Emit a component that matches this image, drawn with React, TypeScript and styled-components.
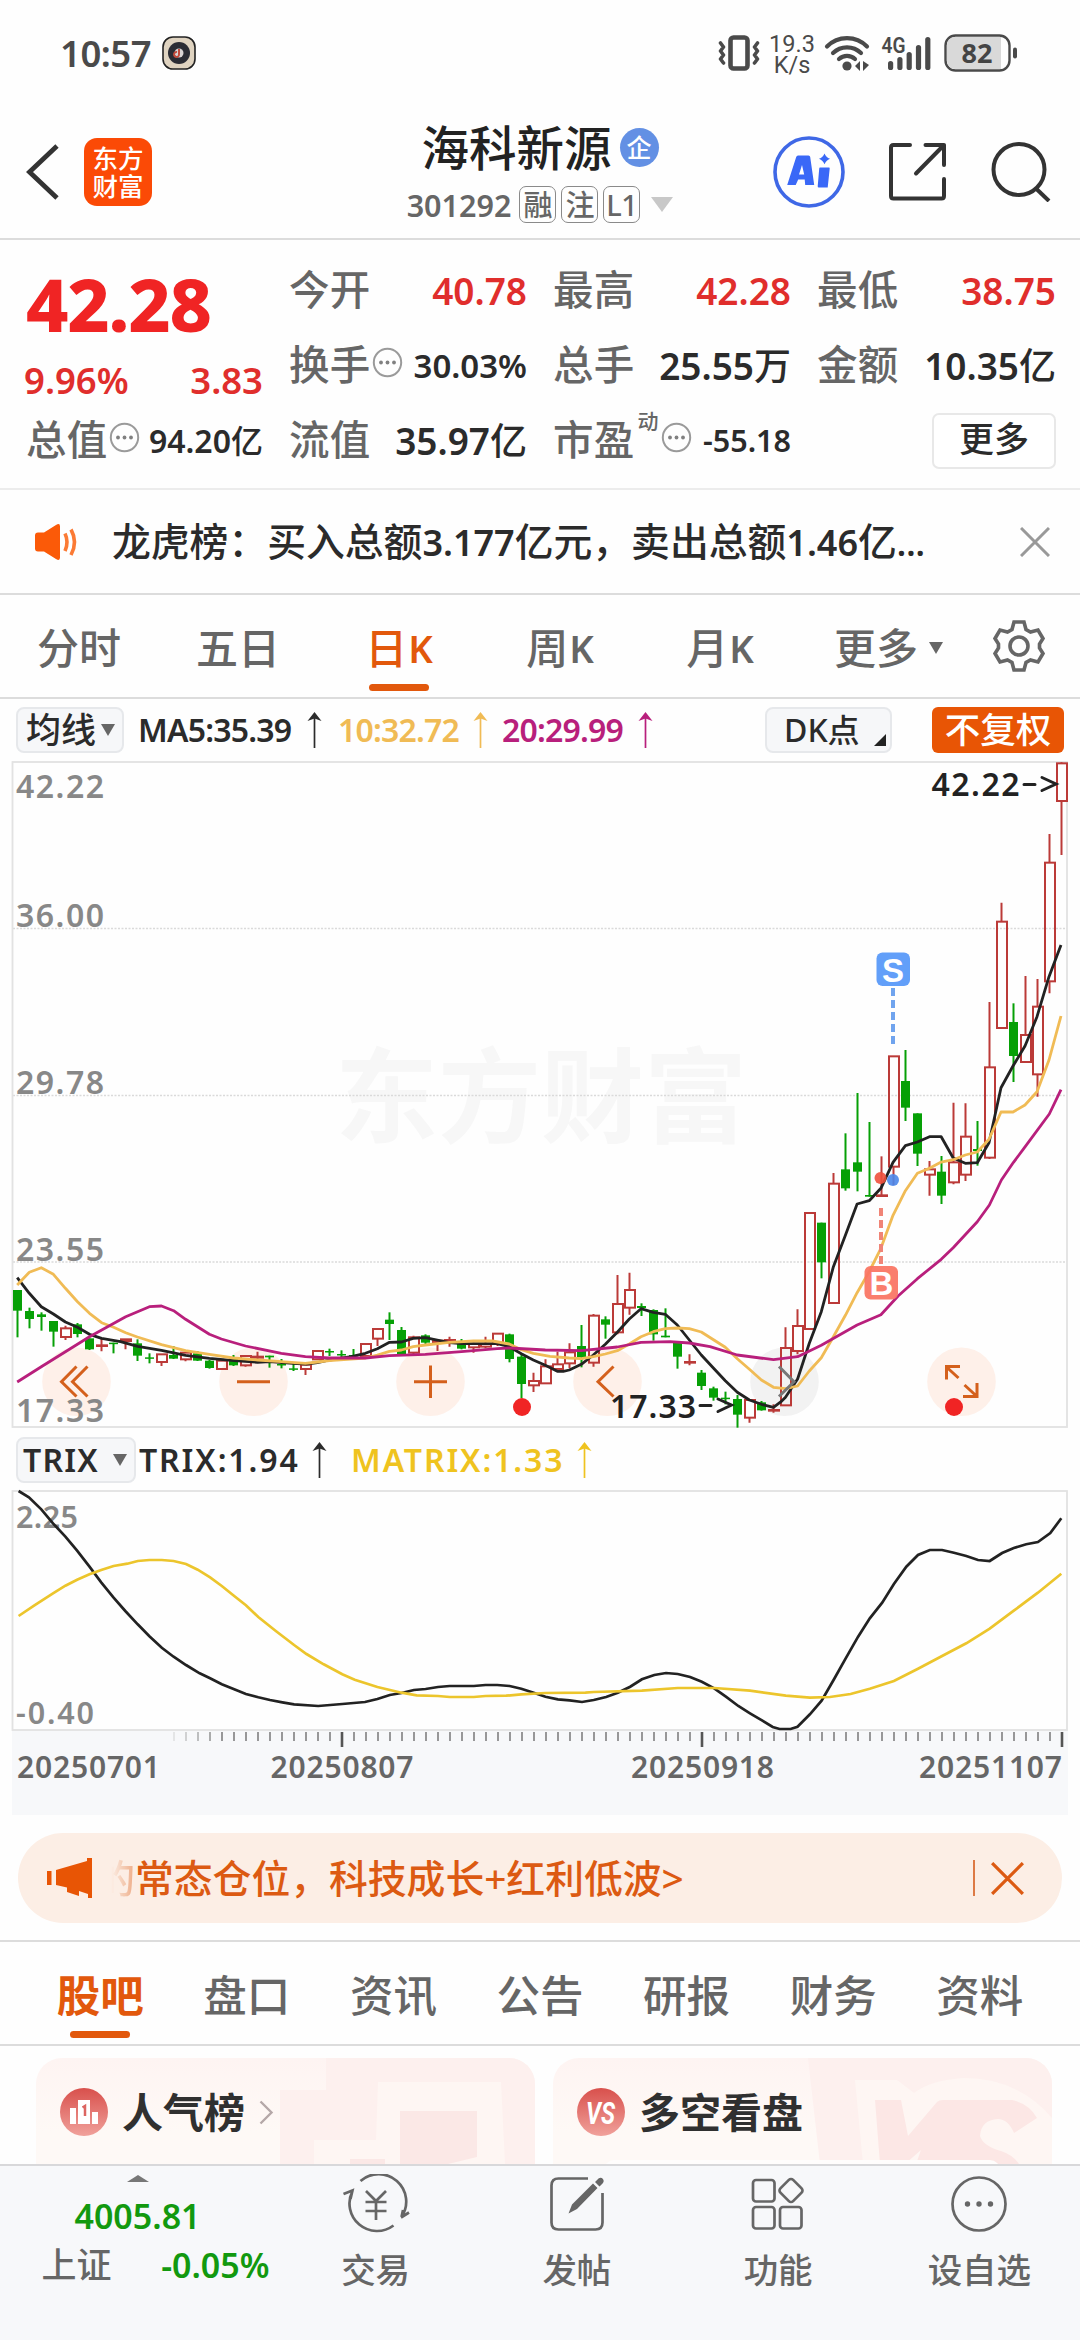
import React from "react";
import styled, { createGlobalStyle, css } from "styled-components";

const ORANGE = "#e2580c";
const RED = "#e02e2c";
const GREEN = "#12990f";
const INK = "#2b2b2b";
const GREY = "#666666";
const AMBER = "#f0bb55";
const GOLD = "#efc31f";
const MAGENTA = "#b81f7c";
const SANS = '"Noto Sans", "Noto Sans CJK SC", sans-serif';

const GlobalStyle = createGlobalStyle`
  * { box-sizing: border-box; }
  body { margin: 0; background: #fefefe; }
`;

const Screen = styled.div`
  width: 1080px;
  height: 2340px;
  overflow: hidden;
  display: flex;
  flex-direction: column;
  background: #fefefe;
  color: ${INK};
  font-family: ${SANS};
  font-weight: 500;
  white-space: nowrap;
  line-height: 1;
  > * { flex: none; }
`;

const Num = styled.span<{ $size?: number; $spacing?: number }>`
  font-weight: 600;
  ${(p) => p.$size && css`font-size: ${p.$size}px;`}
  ${(p) => p.$spacing && css`letter-spacing: ${p.$spacing}px;`}
`;

/* ---------- status bar ---------- */

const StatusBar = styled.div`
  height: 106px;
  padding: 0 62px 0 60px;
  display: flex;
  align-items: center;
  justify-content: space-between;
  color: #4a4a4a;
`;

const StatusGroup = styled.div<{ $gap: number }>`
  display: flex;
  align-items: center;
  gap: ${(p) => p.$gap}px;
`;

const Clock = styled.span`
  font-size: 36.5px;
  font-weight: 600;
  letter-spacing: -0.5px;
`;

const NetSpeed = styled.span`
  width: 42px;
  display: flex;
  flex-direction: column;
  align-items: center;
  font: 400 23.5px/21px Roboto, sans-serif;
  margin-top: 3px;
`;

/* ---------- header ---------- */

const Header = styled.header`
  height: 134px;
  display: flex;
  align-items: center;
  justify-content: space-between;
  border-bottom: 2px solid #dcdcdc;
`;

const HeaderSide = styled.div<{ $end?: boolean }>`
  width: 310px;
  display: flex;
  align-items: center;
  padding: ${(p) => (p.$end ? "0 29px 0 0" : "0 0 0 26px")};
  gap: ${(p) => (p.$end ? 43 : 25)}px;
  justify-content: ${(p) => (p.$end ? "flex-end" : "flex-start")};
`;

const Logo = styled.div`
  width: 68px;
  height: 68px;
  border-radius: 13px;
  background: #fb4a06;
  color: #fff;
  font: 500 25.5px/28px "Noto Sans CJK SC", sans-serif;
  text-align: center;
  white-space: pre-line;
  padding-top: 5px;
`;

const TitleBlock = styled.div`
  display: flex;
  flex-direction: column;
  align-items: center;
  gap: 15px;
  padding-top: 3px;
`;

const TitleRow = styled.div<{ $gap: number }>`
  display: flex;
  align-items: center;
  gap: ${(p) => p.$gap}px;
`;

const StockName = styled.h1`
  margin: 0;
  font-size: 47.5px;
  font-weight: 500;
  color: #222;
`;

const CompanyBadge = styled.span`
  width: 39px;
  height: 39px;
  border-radius: 50%;
  background: #6390e4;
  color: #fff;
  font-size: 25px;
  display: grid;
  place-items: center;
`;

const StockCode = styled.span`
  font-size: 30.5px;
  font-weight: 600;
  color: ${GREY};
  margin-right: 3px;
`;

const Tag = styled.span`
  width: 37px;
  height: 37px;
  border: 1.5px solid #8a8a8a;
  border-radius: 7px;
  color: ${GREY};
  font-size: 29px;
  letter-spacing: -0.5px;
  display: grid;
  place-items: center;
`;

const Triangle = styled.i<{ $w: number; $h: number; $color: string; $up?: boolean; $ml?: number }>`
  width: 0;
  height: 0;
  margin-left: ${(p) => p.$ml ?? 0}px;
  border-left: ${(p) => p.$w / 2}px solid transparent;
  border-right: ${(p) => p.$w / 2}px solid transparent;
  ${(p) =>
    p.$up
      ? css`border-bottom: ${p.$h}px solid ${p.$color};`
      : css`border-top: ${p.$h}px solid ${p.$color};`}
`;

/* ---------- quote ---------- */

const QuoteGrid = styled.section`
  height: 250px;
  padding: 13px 23px 0 26px;
  display: grid;
  grid-template-columns: 237px 238px 238px 239px;
  grid-template-rows: 75px 75px 75px;
  column-gap: 26px;
  border-bottom: 2px solid #ececec;
`;

const PriceCell = styled.div`
  grid-row: span 2;
  display: flex;
  flex-direction: column;
  color: ${RED};
`;

const Price = styled.strong`
  font-size: 73.5px;
  line-height: 102px;
  font-weight: 800;
  letter-spacing: -1.2px;
  color: #f02424;
`;

const PriceChange = styled.div`
  display: flex;
  justify-content: space-between;
  font-size: 36.5px;
  font-weight: 600;
  line-height: 50px;
  margin-left: -2px;
`;

const Cell = styled.div`
  display: flex;
  align-items: center;
`;

const CellLabel = styled.span`
  font-size: 40.5px;
  color: ${GREY};
  letter-spacing: 0.3px;
`;

const CellValue = styled.span<{ $size: number; $color?: string }>`
  margin-left: auto;
  font-size: ${(p) => p.$size}px;
  color: ${(p) => p.$color ?? INK};
`;

const Superscript = styled.sup`
  font-size: 21px;
  line-height: 1;
  color: ${GREY};
  align-self: flex-start;
  margin: 8px 1px 0 3px;
`;

const MoreButton = styled.button`
  margin-left: auto;
  width: 124px;
  height: 56px;
  border: 2px solid #e8e8e8;
  border-radius: 7px;
  background: #fff;
  font: 500 35px/1 ${SANS};
  color: ${INK};
  padding: 0 0 5px;
`;

/* ---------- news ---------- */

const NewsBar = styled.section`
  height: 105px;
  padding: 0 30px 0 33px;
  display: flex;
  align-items: center;
  border-bottom: 2px solid #dcdcdc;
`;

const NewsText = styled.span`
  flex: 1;
  margin-left: 31px;
  font-size: 38.8px;
`;

/* ---------- period tabs ---------- */

const PeriodTabs = styled.nav`
  height: 104px;
  display: flex;
  align-items: stretch;
  border-bottom: 2px solid #dcdcdc;
  padding-right: 34px;
`;

const tabUnderline = css<{ $active?: boolean }>`
  &::after {
    content: "";
    width: 60px;
    height: 7px;
    border-radius: 4px;
    margin-bottom: 6px;
    background: ${(p) => (p.$active ? ORANGE : "transparent")};
  }
`;

const PeriodTab = styled.span<{ $active?: boolean; $w: number }>`
  width: ${(p) => p.$w}px;
  font-size: 42px;
  color: ${(p) => (p.$active ? ORANGE : GREY)};
  display: flex;
  flex-direction: column;
  align-items: center;
  justify-content: flex-end;
  gap: 14px;
  ${tabUnderline}
`;

const TabLabel = styled.span`
  display: flex;
  align-items: center;
  height: 44px;
`;

const KLetter = styled.span`
  font-size: 38px;
  font-weight: 600;
  margin-left: 1px;
`;

const SettingsSlot = styled.span`
  margin-left: auto;
  display: flex;
  align-items: center;
`;

/* ---------- indicator rows ---------- */

const IndicatorRow = styled.div<{ $h: number }>`
  height: ${(p) => p.$h}px;
  display: flex;
  align-items: center;
  padding: 0 16px;
`;

const Chip = styled.span<{ $w: number; $size: number; $corner?: boolean; $pad?: number }>`
  width: ${(p) => p.$w}px;
  height: 46px;
  border: 2px solid #e6e8eb;
  border-radius: 8px;
  background: #f6f7f9;
  display: flex;
  align-items: center;
  justify-content: ${(p) => (p.$corner ? "flex-start" : "space-between")};
  padding: 0 ${(p) => (p.$corner ? 4 : 7)}px 0 ${(p) => p.$pad ?? 8}px;
  font-size: ${(p) => p.$size}px;
`;

const CornerMark = styled.i`
  margin-left: auto;
  align-self: flex-end;
  margin-bottom: 5px;
  border-left: 12px solid transparent;
  border-bottom: 12px solid #222;
`;

const Reading = styled.span<{ $color: string; $ml: number; $w: number; $spacing: number }>`
  margin-left: ${(p) => p.$ml}px;
  width: ${(p) => p.$w}px;
  display: flex;
  align-items: center;
  justify-content: space-between;
  font-size: 32px;
  font-weight: 600;
  letter-spacing: ${(p) => p.$spacing}px;
  color: ${(p) => p.$color};
`;

const SolidChip = styled.span`
  width: 132px;
  height: 46px;
  margin-left: 40px;
  border-radius: 6px;
  background: #e85505;
  color: #fff;
  font-size: 35.5px;
  display: grid;
  place-items: center;
`;

const Grow = styled.span`
  flex: 1;
`;

const ChartSvg = styled.svg`
  display: block;
  flex: none;
  font-family: ${SANS};
  font-weight: 600;
`;

/* ---------- banner ---------- */

const BannerWrap = styled.div`
  padding: 18px 18px 17px;
  border-bottom: 2px solid #dcdcdc;
`;

const Banner = styled.div`
  height: 90px;
  border-radius: 45px;
  background: #fceee5;
  color: #dc5a12;
  display: flex;
  align-items: center;
  padding: 0 38px 0 29px;
`;

const BannerText = styled.span`
  flex: 1;
  margin-left: 17px;
  font-size: 38.8px;
  display: flex;
`;

const FadedGlyph = styled.span`
  width: 25px;
  overflow: hidden;
  direction: rtl;
  opacity: 0.45;
  mask-image: linear-gradient(90deg, transparent 5%, #000);
`;

const BannerDivider = styled.i`
  width: 2px;
  height: 36px;
  background: #dd7a45;
  margin-right: 16px;
`;

/* ---------- section tabs ---------- */

const SectionTabs = styled.nav`
  height: 104px;
  padding: 0 27px;
  display: flex;
  border-bottom: 2px solid #dcdcdc;
`;

const SectionTab = styled.span<{ $active?: boolean }>`
  flex: 1;
  font-size: 43.5px;
  font-weight: ${(p) => (p.$active ? 700 : 500)};
  color: ${(p) => (p.$active ? ORANGE : GREY)};
  display: flex;
  flex-direction: column;
  align-items: center;
  justify-content: flex-end;
  gap: 14px;
  ${tabUnderline}
`;

/* ---------- cards ---------- */

const CardRow = styled.div`
  height: 118px;
  padding: 12px 28px 0 36px;
  display: flex;
  gap: 18px;
  overflow: hidden;
`;

const Card = styled.article`
  position: relative;
  width: 499px;
  height: 106px;
  border-radius: 26px 26px 0 0;
  overflow: hidden;
  background: linear-gradient(180deg, #fef4f2, #fef9f6 70%);
`;

const CardArt = styled.svg`
  position: absolute;
  inset: 0;
`;

const CardHead = styled.div`
  position: relative;
  height: 108px;
  padding-left: 24px;
  display: flex;
  align-items: center;
  font-size: 41px;
  font-weight: 700;
  color: #303030;
`;

const CardTitle = styled.span`
  margin: 0 14px;
`;

/* ---------- bottom bar ---------- */

const BottomBar = styled.footer`
  height: 176px;
  border-top: 2px solid #d8d8da;
  background: #f7f8fa;
  display: flex;
`;

const IndexBlock = styled.div`
  width: 275px;
  display: flex;
  flex-direction: column;
  align-items: center;
  padding: 9px 0 0;
  color: ${GREEN};
  font-weight: 600;
`;

const IndexValue = styled.span`
  font-size: 34px;
  line-height: 40px;
  margin-top: 14px;
`;

const IndexRow = styled.div`
  display: flex;
  align-items: center;
  justify-content: space-between;
  width: 228px;
  margin: 9px 0 0 36px;
  font-size: 34px;
  line-height: 40px;
`;

const IndexName = styled.span`
  font-size: 35px;
  font-weight: 500;
  color: ${GREY};
`;

const NavItem = styled.div`
  flex: 1;
  display: flex;
  flex-direction: column;
  align-items: center;
  padding-top: 8px;
  gap: 19px;
  font-size: 34.5px;
  color: ${GREY};
`;

/* ---------- icons ---------- */

const InfoIcon = styled.svg`
  margin-top: -7px;
  margin-left: 1px;
`;

const InfoDots = () => (
  <InfoIcon width="31" height="31" viewBox="0 0 31 31">
    <circle cx="15.5" cy="15.5" r="13.7" fill="none" stroke="#9a9a9a" strokeWidth="2" />
    {[9, 15.5, 22].map((x) => (
      <circle key={x} cx={x} cy="15.5" r="1.9" fill="#808080" />
    ))}
  </InfoIcon>
);

const AppBadge = () => (
  <svg width="34" height="34" viewBox="0 0 34 34">
    <rect x="1" y="1" width="32" height="32" rx="10" fill="#dfd3c0" stroke="#222" strokeWidth="1.6" />
    <circle cx="17" cy="17" r="11" fill="#2b2c34" />
    <circle cx="17" cy="17" r="4.5" fill="#d9d4d4" />
    <path d="M17 13v5a2.5 2.5 0 1 1-2-2" fill="none" stroke="#c24a3c" strokeWidth="2" />
  </svg>
);

const Vibrate = () => (
  <svg width="42" height="36" viewBox="0 0 42 36" fill="none" stroke="#4a4a4a" strokeLinecap="round" strokeLinejoin="round">
    <rect x="12.5" y="2.5" width="17" height="31" rx="3" strokeWidth="4.6" />
    <path d="M2.500 8l3 4-3 4 3 4-3 4 3 4M39.500 8l-3 4 3 4-3 4 3 4-3 4" strokeWidth="3.600" />
  </svg>
);

const Wifi = () => (
  <svg width="46" height="36" viewBox="0 0 46 36" fill="none" stroke="#4a4a4a" strokeLinecap="round">
    <path d="M3 11.500A28 28 0 0 1 43 11.500" strokeWidth="4.200" />
    <path d="M9 18A20 20 0 0 1 37 18" strokeWidth="4.200" />
    <path d="M15 24A12 12 0 0 1 31 24" strokeWidth="4.200" />
    <circle cx="23" cy="31" r="4.600" fill="#4a4a4a" stroke="none" />
    <path d="M36 26v10l-5-5zM39 26v10l6-6z" fill="#4a4a4a" stroke="none" />
  </svg>
);

const Signal = () => (
  <svg width="52" height="36" viewBox="0 0 52 36" overflow="visible">
    <text x="0.500" y="17.500" fontSize="22" fontWeight="600" fill="#4a4a4a" textLength="24" lengthAdjust="spacingAndGlyphs" fontFamily="Roboto, sans-serif">4G</text>
    {[26, 22, 17, 10, 2].map((y, i) => (
      <rect key={y} x={7 + i * 9.3} y={y} width="5.2" height={35 - y} rx="2.6" fill="#4a4a4a" />
    ))}
  </svg>
);

const Battery = () => (
  <svg width="74" height="38" viewBox="0 0 74 38">
    <rect x="1.500" y="1.500" width="64" height="35" rx="10" fill="#fefefe" stroke="#4a4a4a" strokeWidth="2.400" />
    <path d="M11 3H57V35H11A8 8 0 0 1 3 27V11A8 8 0 0 1 11 3Z" fill="#d9d9d9" />
    <rect x="69" y="13.500" width="4" height="11" rx="2" fill="#4a4a4a" />
    <text x="33" y="28.500" fontSize="27" fontWeight="700" fill="#444" textAnchor="middle">82</text>
  </svg>
);

const Back = () => (
  <svg width="33" height="56" viewBox="0 0 33 56" fill="none" stroke="#333" strokeWidth="4.800">
    <path d="M31 2L3.500 28L31 54" />
  </svg>
);

const AiIcon = () => (
  <svg width="72" height="72" viewBox="0 0 72 72">
    <circle cx="36" cy="36" r="34" fill="none" stroke="#3f68e6" strokeWidth="3.600" />
    <path d="M25 19.500h10.500q1.500 0 1.700 1.500l4 28h-9l-.5-5.500h-6.500l-2.500 5.500h-8.500l9-28q.5-1.500 1.800-1.500zM29 29l-3 9.500h5.200z" fill="#3a68f7" fillRule="evenodd" />
    <path d="M47 31.500h9q.8 0 .7 1l-2 19h-8.800q-1.300 0-1.200-1.200l1.500-17.500q.1-1.300.8-1.300zM51.500 17.500q1.500 4 5.500 5.200q-4 1.500-5.500 5.500q-1.500-4-5.500-5.500q4-1.200 5.500-5.200z" fill="#3a68f7" />
  </svg>
);

const Share = () => (
  <svg width="60" height="60" viewBox="0 0 60 60" fill="none" stroke="#333" strokeWidth="4" strokeLinecap="round" strokeLinejoin="round">
    <path d="M22 3H5.500Q3 3 3 5.500V54Q3 56.500 5.500 56.500H53.500Q56 56.500 56 54V37M37.500 3H56V23M56 3L28 31.500" />
  </svg>
);

const Search = () => (
  <svg width="60" height="60" viewBox="0 0 60 60" fill="none" stroke="#333" strokeWidth="4">
    <circle cx="28" cy="27.500" r="25.500" />
    <path d="M45 46.500L58 59" />
  </svg>
);

const Speaker = () => (
  <svg width="48" height="40" viewBox="0 0 48 40">
    <path d="M2 13.500Q2 10.500 5 10.500H11L23 3Q27 0.500 27 4.500V35.500Q27 39.500 23 37L11 29.500H5Q2 29.500 2 26.500Z" fill="#fb5a08" />
    <path d="M32 11.500Q36 20 32 29M38 7.500Q45 20 38 33" fill="none" stroke="#fb7a34" strokeWidth="3.600" />
  </svg>
);

const Cross = ({ size, color }: { size: number; color: string }) => (
  <svg width={size} height={size} viewBox="0 0 30 30" stroke={color} strokeWidth="3">
    <path d="M1 1L29 29M29 1L1 29" />
  </svg>
);

const Gear = () => (
  <svg width="54" height="54" viewBox="0 0 54 54" fill="none" stroke={GREY} strokeWidth="3.600" strokeLinejoin="miter">
    <path d="M22 3H32L34 10.500L38.500 13L46 11L51 19.500L47.500 25V29L51 34.500L46 43L38.500 41L34 43.500L32 51H22L20 43.500L15.500 41L8 43L3 34.500L6.500 29V25L3 19.500L8 11L15.500 13L20 10.500Z" />
    <circle cx="27" cy="27" r="9" />
  </svg>
);

const UpArrow = ({ color }: { color: string }) => (
  <svg width="15" height="36" viewBox="0 0 15 36">
    <path d="M7.500 4V36" stroke={color} strokeWidth="1.700" />
    <path d="M7.500 0L14.500 9L7.500 6.500L.5 9Z" fill={color} />
  </svg>
);

const Megaphone = () => (
  <svg width="46" height="40" viewBox="0 0 46 40" fill="#e85505">
    <path d="M0 13H4.500V27H0ZM9 12L40 3V0H45V40H41V36L32 33V38L20 34V29.500L9 27Z" />
  </svg>
);

const PodiumIcon = () => (
  <svg width="48" height="48" viewBox="0 0 48 48">
    <defs>
      <linearGradient id="coral" x1="0" y1="0" x2="0" y2="1">
        <stop offset="0" stopColor="#d8504c" />
        <stop offset="1" stopColor="#f0a19b" />
      </linearGradient>
    </defs>
    <circle cx="24" cy="24" r="24" fill="url(#coral)" />
    <path d="M10 20H16V36H10ZM18 12H30V36H18ZM32 24H38V36H32Z" fill="#fff" />
    <path d="M22.500 19.500L25 18V28" fill="none" stroke="#dc6561" strokeWidth="2.500" />
  </svg>
);

const VsIcon = () => (
  <svg width="48" height="48" viewBox="0 0 48 48">
    <circle cx="24" cy="24" r="24" fill="url(#coral)" />
    <text x="9" y="35.500" fontSize="32" fontWeight="700" fontStyle="italic" fill="#fff" textLength="29" lengthAdjust="spacingAndGlyphs" fontFamily="Roboto, sans-serif">VS</text>
  </svg>
);

const Chevron = () => (
  <svg width="15" height="25" viewBox="0 0 15 25" fill="none" stroke="#b5a8a8" strokeWidth="2.400">
    <path d="M1.500 1.500L12.500 12.500L1.500 23.500" />
  </svg>
);

const navStroke = { fill: "none", stroke: GREY, strokeWidth: 2.7 } as const;

const TradeIcon = () => (
  <svg width="68" height="60" viewBox="0 0 68 60" {...navStroke}>
    <path d="M18.500 7A27.500 27.500 0 0 1 59.500 43M59 43.500L67 38.500M59.500 43L61 36M51.500 51.500A27.500 27.500 0 0 1 10.500 17M1.500 20L10.500 16.500L8.500 25" />
    <path d="M24 17L34 27L44 17M23.500 28H44.500M23.500 37H44.500M34 27V46" />
  </svg>
);

const PostIcon = () => (
  <svg width="60" height="60" viewBox="0 0 60 60" {...navStroke}>
    <path d="M41 4.500H11.500Q4.500 4.500 4.500 11.500V48.500Q4.500 55.500 11.500 55.500H48.500Q55.500 55.500 55.500 48.500V19" />
    <path d="M21.500 39.500L25 30.500L46 9.500L50.500 14L30 35ZM48 8L51.500 4.500Q54 3 56 5Q57.500 7 56 9L52.500 12.500Z" fill={GREY} stroke="none" />
  </svg>
);

const ToolsIcon = () => (
  <svg width="60" height="60" viewBox="0 0 60 60" {...navStroke}>
    <rect x="5" y="6" width="21.500" height="21.500" rx="3" />
    <rect x="5" y="33" width="21.500" height="21.500" rx="3" />
    <rect x="32" y="33" width="21.500" height="21.500" rx="3" />
    <rect x="34" y="7.500" width="18" height="18" rx="3" transform="rotate(45 43 16.500)" />
  </svg>
);

const AddIcon = () => (
  <svg width="60" height="60" viewBox="0 0 60 60" {...navStroke}>
    <circle cx="30" cy="30" r="26.500" />
    {[18.5, 30, 41.5].map((x) => (
      <circle key={x} cx={x} cy="30" r="2.700" fill={GREY} stroke="none" />
    ))}
  </svg>
);

/* ---------- chart data ---------- */

type Candle = ["r" | "g", number, number, number, number];
type Point = [number, number];

const STEP = 12;
const FIRST_X = 17.5;

const scaleCandles = (origin: number, rows: Candle[]): Candle[] =>
  rows.map(([kind, ...v]) => [kind, ...v.map((n) => origin + n / 3)] as Candle);

const scaleLine = (ox: number, oy: number, sx: number, points: Point[]) =>
  points.map(([x, y]) => `${(ox + x / sx).toFixed(1)},${(oy + y / 3).toFixed(1)}`).join(" ");

/* kind, high, body top, body bottom, low */
const CANDLES: Candle[] = [
  ...scaleCandles(1240, [
    ["g", 150, 150, 212, 292], ["g", 203, 213, 237, 265], ["g", 217, 223, 231, 272], ["g", 243, 243, 275, 320],
    ["r", 257, 265, 291, 300], ["g", 249, 253, 282, 292], ["g", 295, 295, 328, 330], ["r", 297, 316, 318, 334],
    ["g", 308, 308, 312, 340], ["r", 297, 298, 303, 328], ["g", 298, 310, 347, 363], ["g", 340, 352, 356, 370],
    ["r", 343, 343, 366, 378], ["g", 318, 345, 356, 357], ["r", 336, 338, 358, 364], ["g", 333, 340, 362, 363],
    ["g", 360, 362, 384, 386], ["r", 362, 362, 387, 388], ["g", 345, 355, 376, 378], ["r", 346, 348, 376, 380],
    ["r", 335, 350, 353, 362], ["g", 347, 347, 352, 383], ["g", 357, 372, 376, 385], ["g", 372, 385, 388, 393],
    ["r", 372, 374, 387, 405], ["r", 331, 333, 358, 358], ["g", 326, 333, 337, 348], ["g", 331, 342, 346, 352],
    ["g", 327, 345, 348, 352], ["r", 309, 312, 348, 350], ["r", 265, 267, 296, 318], ["g", 217, 239, 252, 300],
    ["g", 261, 270, 342, 342], ["r", 287, 292, 338, 348], ["g", 283, 286, 308, 318], ["r", 300, 302, 306, 333],
    ["r", 290, 300, 304, 320], ["g", 297, 308, 326, 328], ["r", 308, 312, 322, 338], ["r", 290, 312, 320, 325],
    ["r", 280, 281, 310, 318], ["g", 281, 283, 357, 367], ["g", 340, 350, 432, 475], ["r", 398, 423, 436, 456],
    ["r", 358, 379, 430, 432], ["r", 335, 373, 387, 390], ["r", 310, 337, 370, 385], ["g", 255, 318, 352, 382],
    ["r", 222, 227, 368, 380], ["g", 229, 238, 254, 296], ["r", 105, 192, 277, 283], ["r", 98, 150, 203, 224],
    ["g", 190, 198, 204, 228], ["g", 208, 210, 283, 302], ["g", 205, 287, 292, 292], ["g", 303, 306, 350, 386],
    ["r", 343, 366, 368, 376], ["g", 390, 398, 438, 450],
  ]),
  ...scaleCandles(1000, [
    ["g", 1160, 1165, 1193, 1202], ["g", 1175, 1193, 1197, 1213], ["g", 1185, 1197, 1244, 1283],
    ["r", 1198, 1200, 1253, 1268], ["g", 1203, 1207, 1231, 1232], ["r", 1213, 1230, 1232, 1238],
    ["r", 982, 1044, 1216, 1217], ["r", 928, 978, 1053, 1063], ["r", 638, 639, 987, 988], ["g", 668, 668, 787, 835],
    ["r", 519, 551, 909, 910], ["g", 400, 508, 565, 572], ["g", 279, 487, 515, 574], ["g", 366, 585, 590, 590],
    ["r", 469, 586, 588, 588], ["r", 168, 169, 500, 555], ["g", 150, 243, 323, 363], ["g", 340, 340, 461, 498],
    ["r", 483, 508, 524, 587], ["g", 468, 515, 587, 612], ["r", 308, 487, 547, 553], ["r", 310, 410, 524, 543],
    ["g", 363, 447, 453, 497],
  ]),
  ...scaleCandles(740, [
    ["r", 786, 982, 1253, 1257], ["r", 488, 545, 864, 865], ["g", 790, 846, 948, 1026], ["r", 708, 885, 966, 968],
    ["r", 717, 800, 1003, 1070], ["r", 282, 368, 724, 760], ["r", 67, 70, 183, 345],
  ]),
];

const MA5 = [
  scaleLine(0, 1240, 2.904, [[50, 113], [85, 160], [120, 200], [155, 222], [190, 246], [225, 262], [260, 283], [295, 295], [350, 305], [400, 319], [469, 331], [539, 346], [608, 355], [680, 362], [748, 367], [783, 365], [850, 370], [890, 372], [922, 368], [957, 360], [1020, 350], [1061, 340], [1096, 326], [1131, 307], [1166, 306], [1200, 295], [1235, 293], [1270, 300], [1305, 308], [1340, 311], [1444, 311], [1479, 320]]),
  scaleLine(440, 1240, 3, [[244, 341], [280, 360], [316, 376], [352, 394], [370, 394], [388, 390], [424, 373], [460, 345], [496, 313], [532, 277], [568, 237], [603, 206], [640, 217], [676, 223], [712, 255], [748, 300], [784, 345]]),
  scaleLine(540, 1000, 2.904, [[504, 1105], [538, 1142], [573, 1177], [608, 1200], [643, 1213], [678, 1222], [700, 1205], [713, 1192], [748, 1137], [782, 1030], [817, 935], [852, 800], [887, 706], [921, 612], [956, 602], [990, 565], [1025, 487], [1061, 437], [1096, 426], [1131, 410], [1165, 410], [1200, 474], [1235, 490], [1270, 488]]),
  scaleLine(780, 740, 3, [[627, 1208], [663, 1043], [699, 978], [735, 918], [771, 830], [807, 710], [843, 615]]),
].join(" ");

const MA10 = [
  scaleLine(0, 1240, 2.904, [[50, 135], [85, 97], [120, 83], [155, 103], [190, 145], [225, 185], [260, 220], [295, 248], [330, 262], [365, 278], [399, 291], [469, 314], [539, 332], [608, 343], [678, 354], [748, 360], [817, 365], [887, 370], [922, 366], [957, 362], [1061, 354], [1096, 345], [1131, 334], [1166, 330], [1200, 320], [1235, 315], [1305, 307], [1375, 303], [1430, 303], [1479, 312]]),
  scaleLine(440, 1240, 3, [[244, 329], [280, 340], [330, 349], [388, 354], [424, 356], [460, 350], [496, 342], [532, 332], [568, 312], [603, 290], [640, 275], [676, 266], [712, 264], [748, 266], [784, 276]]),
  scaleLine(540, 1000, 2.904, [[538, 1042], [573, 1076], [608, 1108], [643, 1140], [678, 1162], [713, 1166], [748, 1158], [782, 1113], [817, 1073], [852, 1010], [887, 946], [921, 878], [956, 815], [990, 745], [1025, 646], [1061, 572], [1096, 520], [1131, 505], [1165, 486], [1200, 479], [1235, 465], [1270, 456]]),
  scaleLine(780, 740, 3, [[627, 1198], [663, 1116], [699, 1116], [735, 1095], [771, 1055], [807, 960], [843, 828]]),
].join(" ");

const MA20 = [
  scaleLine(0, 1240, 2.904, [[50, 426], [120, 380], [190, 335], [260, 290], [365, 230], [434, 200], [469, 198], [504, 212], [539, 238], [608, 283], [643, 297], [713, 318], [817, 340], [887, 350], [957, 354], [1061, 354], [1131, 347], [1235, 343], [1340, 335], [1444, 326], [1479, 324]]),
  scaleLine(440, 1240, 3, [[316, 330], [424, 332], [532, 321], [603, 307], [690, 305], [748, 309], [810, 320]]),
  scaleLine(540, 1000, 2.904, [[573, 1065], [678, 1079], [748, 1070], [817, 1036], [921, 975], [990, 944], [1040, 888], [1096, 836], [1165, 778], [1200, 743], [1270, 665], [1305, 615], [1340, 540], [1375, 487], [1409, 440], [1479, 342], [1513, 269]]),
].join(" ");

const TRIX = scaleLine(0, 1420, 1.452, [[27, 213], [42, 232], [60, 268], [77, 310], [95, 350], [112, 392], [130, 440], [147, 487], [165, 533], [182, 573], [200, 613], [217, 649], [235, 683], [252, 710], [270, 735], [290, 760], [305, 775], [322, 793], [340, 808], [357, 822], [375, 832], [392, 840], [410, 847], [427, 853], [462, 858], [497, 852], [530, 846], [548, 837], [566, 825], [583, 819], [601, 810], [618, 807], [636, 801], [653, 798], [688, 798], [705, 795], [722, 795], [740, 798], [757, 806], [775, 818], [792, 830], [810, 838], [827, 841], [845, 846], [862, 840], [880, 831], [897, 818], [915, 800], [932, 778], [950, 765], [967, 759], [984, 762], [1002, 771], [1019, 785], [1037, 805], [1054, 830], [1072, 858], [1089, 880], [1107, 902], [1122, 921], [1132, 927], [1148, 927], [1158, 920], [1176, 883], [1193, 842], [1211, 778], [1228, 715], [1246, 650], [1263, 595], [1281, 548], [1298, 492], [1316, 440], [1333, 405], [1350, 390], [1368, 390], [1385, 398], [1403, 408], [1420, 420], [1437, 423], [1455, 399], [1472, 384], [1490, 373], [1507, 366], [1525, 339], [1541, 295]]);

const MATRIX = scaleLine(0, 1420, 1.452, [[27, 588], [50, 556], [77, 520], [95, 497], [112, 479], [130, 463], [147, 450], [165, 438], [185, 431], [200, 423], [217, 420], [235, 420], [252, 423], [270, 432], [287, 449], [305, 472], [322, 498], [340, 528], [357, 556], [375, 591], [400, 632], [427, 675], [445, 702], [470, 733], [497, 763], [515, 779], [548, 801], [583, 818], [605, 826], [636, 828], [653, 831], [688, 831], [705, 828], [735, 827], [757, 823], [792, 819], [850, 818], [862, 816], [932, 812], [984, 804], [1037, 804], [1089, 812], [1141, 827], [1176, 833], [1205, 831], [1235, 822], [1263, 806], [1298, 783], [1333, 746], [1368, 708], [1403, 670], [1437, 626], [1472, 572], [1507, 518], [1541, 461]]);

const PRICE_LABELS: [string, number][] = [["42.22", 798], ["36.00", 927], ["29.78", 1093.5], ["23.55", 1260.5], ["17.33", 1422]];
const CONTROL_XS = [76.5, 253.5, 430.5, 607.5, 784.5, 961.5];

const CandleMark = ({ candle, index }: { candle: Candle; index: number }) => {
  const [kind, high, top, bottom, low] = candle;
  const x = FIRST_X + index * STEP;
  if (kind === "g") {
    return (
      <g fill="#06a006">
        <rect x={x - 1} y={high} width="2" height={low - high} />
        <rect x={x - 4.5} y={top} width="9" height={Math.max(bottom - top, 1.5)} />
      </g>
    );
  }
  return (
    <g stroke="#bb3a38" strokeWidth="2" fill="none">
      <path d={`M${x} ${high}V${top}M${x} ${bottom}V${low}`} />
      <rect x={x - 4.5} y={top} width="10" height={Math.max(bottom - top, 0.5)} />
    </g>
  );
};

const KLineChart = () => (
  <ChartSvg width="1080" height="672" viewBox="0 760 1080 672">
    <text x="335" y="1135" fontSize="103" fontWeight="700" fill="#f7f7f7">东方财富</text>
    <path d="M13 928.500H1067M13 1095.500H1067M13 1262H1067" stroke="#dadada" strokeWidth="1.300" strokeDasharray="2 1.500" />
    <rect x="12.500" y="762" width="1054.500" height="665" fill="none" stroke="#e2e2e2" strokeWidth="1.800" />
    {CONTROL_XS.map((x, i) => (
      <circle key={x} cx={x} cy="1381.700" r="34.300" fill={i === 4 ? "#f2f2f2" : "#fef0e9"} />
    ))}
    {PRICE_LABELS.map(([label, y]) => (
      <text key={label} x="16" y={y} fontSize="32" fill="#888" textLength="88">{label}</text>
    ))}
    {CANDLES.map((candle, i) => (
      <CandleMark key={i} candle={candle} index={i} />
    ))}
    <g fill="none" strokeWidth="2.800" strokeLinejoin="round">
      <polyline points={MA5} stroke="#222" />
      <polyline points={MA10} stroke={AMBER} />
      <polyline points={MA20} stroke={MAGENTA} />
    </g>
    <g fill="none" stroke="#d4601c" strokeWidth="3">
      <path d="M76.500 1366.500L61.500 1381.700L76.500 1396.500M87.500 1366.500L72.500 1381.700L87.500 1396.500" />
      <path d="M237 1381.700H270M414 1381.700H447M430.500 1365.500V1398" />
      <path d="M613.500 1366.500L598 1381.700L613.500 1396.500" />
      <path d="M779 1366.500L794 1381.700L779 1396.500" stroke="#777" />
      <path d="M958.500 1378L946.500 1367M946.500 1379.500V1366.500H960M964.500 1385L977 1396.500M977 1383V1396.500H963" />
    </g>
    <circle cx="522" cy="1407" r="9" fill="#f02424" />
    <circle cx="954" cy="1407" r="9" fill="#f02424" />
    <text x="931.500" y="796" fontSize="32" fill="#222" textLength="88">42.22</text>
    <text x="610" y="1417.500" fontSize="32" fill="#222" textLength="86">17.33</text>
    <g fill="none" stroke="#222" strokeWidth="3" strokeLinecap="round">
      <path d="M1024 784.500H1035M1042 777.500L1056 784L1042 790.500" />
      <path d="M700 1405.500H711M718 1399L731.500 1405L718 1411.500" />
    </g>
    <path d="M893 988V1044" stroke="#70a4ee" strokeWidth="4" strokeDasharray="8 4" />
    <path d="M881 1208V1265" stroke="#f08476" strokeWidth="4" strokeDasharray="8 4" />
    <circle cx="880.500" cy="1178" r="6" fill="#f0503c" fillOpacity=".9" />
    <circle cx="893" cy="1180" r="6" fill="#4b87ea" fillOpacity=".9" />
    <rect x="876.500" y="952.500" width="33.500" height="33.500" rx="6" fill="#629ff9" />
    <rect x="864.500" y="1266" width="33.500" height="33.500" rx="6" fill="#fa7462" fillOpacity=".93" />
    <g fill="#fff" fontSize="33" fontWeight="700" textAnchor="middle" fontFamily='"Liberation Sans", sans-serif'>
      <text x="893" y="981.500">S</text>
      <text x="881.500" y="1294.500">B</text>
    </g>
  </ChartSvg>
);

const DATE_LABELS: [string, number][] = [["20250701", 17], ["20250807", 270.5], ["20250918", 631], ["20251107", 919]];

const TrixChart = () => (
  <ChartSvg width="1080" height="327" viewBox="0 1488 1080 327">
    <rect x="12" y="1731" width="1056" height="84.500" fill="#f7f8fa" />
    <rect x="12.500" y="1491" width="1054.500" height="239" fill="#fefefe" stroke="#e2e2e2" strokeWidth="1.800" />
    <text x="16" y="1528" fontSize="30.500" fill="#888" textLength="62">2.25</text>
    <text x="16" y="1724" fontSize="30.500" fill="#888" textLength="78">-0.40</text>
    <polyline points={TRIX} fill="none" stroke="#222" strokeWidth="2.700" />
    <polyline points={MATRIX} fill="none" stroke="#ecc52c" strokeWidth="2.700" />
    {Array.from({ length: 75 }, (_, i) => {
      const long = i === 14 || i === 44 || i === 74;
      const x = 174 + i * STEP;
      return (
        <path key={i} d={`M${x} 1732V${long ? 1747 : 1741}`} stroke={long ? "#555" : "#777"} strokeWidth={long ? 2.6 : 1.5} opacity={Math.min(1, 0.2 + i * 0.2)} />
      );
    })}
    {DATE_LABELS.map(([label, x]) => (
      <text key={label} x={x} y="1778" fontSize="30" fill={GREY} textLength="143">{label}</text>
    ))}
  </ChartSvg>
);

/* ---------- page ---------- */

const PERIODS: { label: string; w: number; active?: boolean; menu?: boolean; k?: boolean }[] = [
  { label: "分时", w: 158 },
  { label: "五日", w: 160 },
  { label: "日", w: 162, active: true, k: true },
  { label: "周", w: 160, k: true },
  { label: "月", w: 160, k: true },
  { label: "更多", w: 177, menu: true },
];

const SECTIONS = ["股吧", "盘口", "资讯", "公告", "研报", "财务", "资料"];

const NAV = [
  { label: "交易", icon: <TradeIcon /> },
  { label: "发帖", icon: <PostIcon /> },
  { label: "功能", icon: <ToolsIcon /> },
  { label: "设自选", icon: <AddIcon /> },
];

export default function App() {
  return (
    <Screen>
      <GlobalStyle />
      <StatusBar>
        <StatusGroup $gap={11}>
          <Clock>10:57</Clock>
          <AppBadge />
        </StatusGroup>
        <StatusGroup $gap={11}>
          <Vibrate />
          <NetSpeed>
            <span>19.3</span>
            <span>K/s</span>
          </NetSpeed>
          <Wifi />
          <Signal />
          <Battery />
        </StatusGroup>
      </StatusBar>

      <Header>
        <HeaderSide>
          <Back />
          <Logo>{"东方\n财富"}</Logo>
        </HeaderSide>
        <TitleBlock>
          <TitleRow $gap={8}>
            <StockName>海科新源</StockName>
            <CompanyBadge>企</CompanyBadge>
          </TitleRow>
          <TitleRow $gap={5}>
            <StockCode>301292</StockCode>
            <Tag>融</Tag>
            <Tag>注</Tag>
            <Tag>L1</Tag>
            <Triangle $w={22} $h={15} $ml={6} $color="#c8c8c8" />
          </TitleRow>
        </TitleBlock>
        <HeaderSide $end>
          <AiIcon />
          <Share />
          <Search />
        </HeaderSide>
      </Header>

      <QuoteGrid>
        <PriceCell>
          <Price>42.28</Price>
          <PriceChange>
            <span>9.96%</span>
            <span>3.83</span>
          </PriceChange>
        </PriceCell>
        <Cell><CellLabel>今开</CellLabel><CellValue $size={37} $color={RED}><Num>40.78</Num></CellValue></Cell>
        <Cell><CellLabel>最高</CellLabel><CellValue $size={37} $color={RED}><Num>42.28</Num></CellValue></Cell>
        <Cell><CellLabel>最低</CellLabel><CellValue $size={37} $color={RED}><Num>38.75</Num></CellValue></Cell>
        <Cell><CellLabel>换手</CellLabel><InfoDots /><CellValue $size={33}><Num>30.03%</Num></CellValue></Cell>
        <Cell><CellLabel>总手</CellLabel><CellValue $size={37}><Num>25.55</Num>万</CellValue></Cell>
        <Cell><CellLabel>金额</CellLabel><CellValue $size={37}><Num>10.35</Num>亿</CellValue></Cell>
        <Cell><CellLabel>总值</CellLabel><InfoDots /><CellValue $size={32}><Num>94.20</Num>亿</CellValue></Cell>
        <Cell><CellLabel>流值</CellLabel><CellValue $size={37}><Num>35.97</Num>亿</CellValue></Cell>
        <Cell><CellLabel>市盈</CellLabel><Superscript>动</Superscript><InfoDots /><CellValue $size={30.5}><Num>-55.18</Num></CellValue></Cell>
        <Cell><MoreButton>更多</MoreButton></Cell>
      </QuoteGrid>

      <NewsBar>
        <Speaker />
        <NewsText>
          龙虎榜：买入总额<Num $size={36}>3.177</Num>亿元，卖出总额<Num $size={36}>1.46</Num>亿<Num $size={34}>...</Num>
        </NewsText>
        <Cross size={30} color="#999" />
      </NewsBar>

      <PeriodTabs>
        {PERIODS.map((p) => (
          <PeriodTab key={p.label} $w={p.w} $active={p.active}>
            <TabLabel>
              {p.label}
              {p.k && <KLetter>K</KLetter>}
              {p.menu && <Triangle $w={15} $h={12} $ml={11} $color={GREY} />}
            </TabLabel>
          </PeriodTab>
        ))}
        <SettingsSlot><Gear /></SettingsSlot>
      </PeriodTabs>

      <IndicatorRow $h={61}>
        <Chip $w={108} $size={35}>均线<Triangle $w={15} $h={12} $color={GREY} /></Chip>
        <Reading $color={INK} $ml={14} $w={184} $spacing={-0.8}>MA5:35.39<UpArrow color={INK} /></Reading>
        <Reading $color={AMBER} $ml={16} $w={150} $spacing={-0.8}>10:32.72<UpArrow color={AMBER} /></Reading>
        <Reading $color={MAGENTA} $ml={14} $w={151} $spacing={-0.8}>20:29.99<UpArrow color={MAGENTA} /></Reading>
        <Grow />
        <Chip $w={127} $size={32} $pad={17} $corner>DK点<CornerMark /></Chip>
        <SolidChip>不复权</SolidChip>
      </IndicatorRow>

      <KLineChart />

      <IndicatorRow $h={56}>
        <Chip $w={120} $size={32} $pad={5}><Num $size={32} $spacing={1.2}>TRIX</Num><Triangle $w={15} $h={12} $color={GREY} /></Chip>
        <Reading $color={INK} $ml={3} $w={188} $spacing={1.9}>TRIX:1.94<UpArrow color={INK} /></Reading>
        <Reading $color={GOLD} $ml={24} $w={241} $spacing={1.9}>MATRIX:1.33<UpArrow color={GOLD} /></Reading>
      </IndicatorRow>

      <TrixChart />

      <BannerWrap>
        <Banner>
          <Megaphone />
          <BannerText>
            <FadedGlyph>的</FadedGlyph>
            常态仓位，科技成长+红利低波&gt;
          </BannerText>
          <BannerDivider />
          <Cross size={33} color="#dc5a12" />
        </Banner>
      </BannerWrap>

      <SectionTabs>
        {SECTIONS.map((s, i) => (
          <SectionTab key={s} $active={i === 0}>{s}</SectionTab>
        ))}
      </SectionTabs>

      <CardRow>
        <Card>
          <CardArt width="499" height="106" viewBox="0 0 499 106">
            <path d="M290 0H499V106H244V32H290Z" fill="#fdf0ee" />
            <path d="M342 24H465L469 106H278V82H340Z" fill="#fef6f3" />
            <path d="M364 53H441V99L412 106H364ZM314 101H349V106H314Z" fill="#fbe8e6" />
          </CardArt>
          <CardHead>
            <PodiumIcon />
            <CardTitle>人气榜</CardTitle>
            <Chevron />
          </CardHead>
        </Card>
        <Card>
          <CardArt width="499" height="106" viewBox="0 0 499 106">
            <path d="M255 0H499V106H267Z" fill="#fdf0ee" />
            <path d="M302 22H344Q352 28 361 35Q378 22 411 20Q465 20 499 60V106H310Z" fill="#fef6f3" />
            <path d="M322 42H348L355 78L384 44Q386 42 390 42H459Q476 46 484 60L461 75Q455 61 445 61Q428 62 427 78Q430 88 448 93Q460 97 466 106H363L368 92L352 106H327Z" fill="#fce7e5" />
            <rect x="51" y="102" width="396" height="20" rx="10" fill="#fffdfc" />
          </CardArt>
          <CardHead>
            <VsIcon />
            <CardTitle>多空看盘</CardTitle>
          </CardHead>
        </Card>
      </CardRow>

      <BottomBar>
        <IndexBlock>
          <Triangle $w={22} $h={7} $color="#777" $up />
          <IndexValue>4005.81</IndexValue>
          <IndexRow>
            <IndexName>上证</IndexName>
            <span>-0.05%</span>
          </IndexRow>
        </IndexBlock>
        {NAV.map((n) => (
          <NavItem key={n.label}>
            {n.icon}
            {n.label}
          </NavItem>
        ))}
      </BottomBar>
    </Screen>
  );
}
